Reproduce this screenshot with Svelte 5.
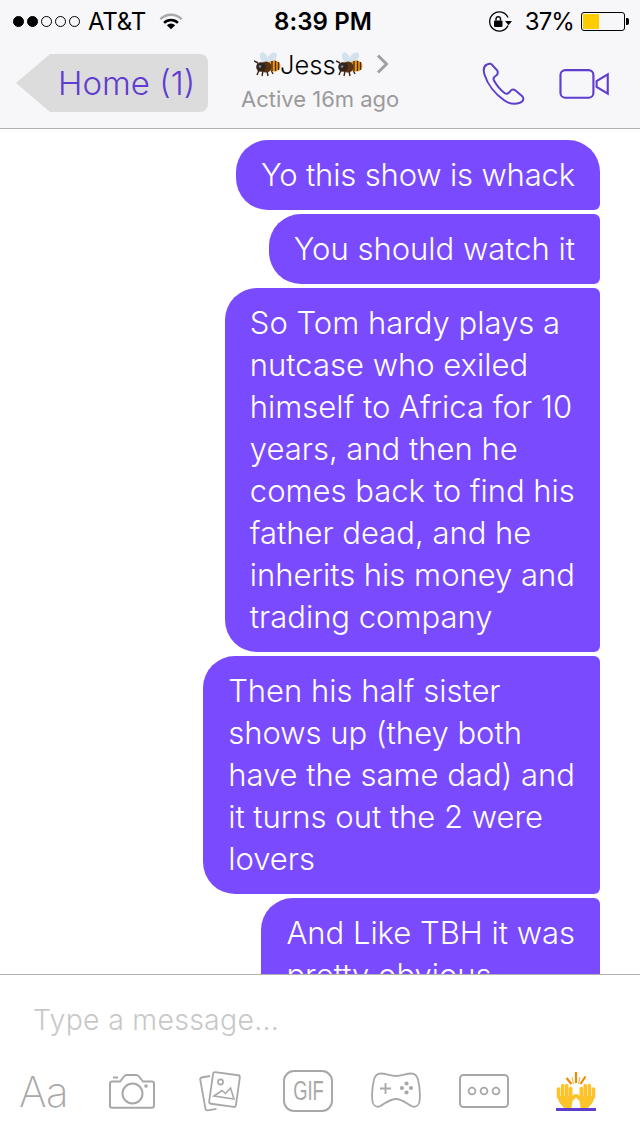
<script>
  const messages = [
    { lines: ['Yo this show is whack'], kind: 'first' },
    { lines: ['You should watch it'], kind: 'mid' },
    { lines: ['So Tom hardy plays a', 'nutcase who exiled', 'himself to Africa for 10', 'years, and then he', 'comes back to find his', 'father dead, and he', 'inherits his money and', 'trading company'], kind: 'mid' },
    { lines: ['Then his half sister', 'shows up (they both', 'have the same dad) and', 'it turns out the 2 were', 'lovers'], kind: 'mid' },
    { lines: ['And Like TBH it was', 'pretty obvious'], kind: 'mid' }
  ];
</script>

{#snippet bee()}
  <svg class="bee" viewBox="0 0 27 25" aria-hidden="true">
    <ellipse cx="10" cy="6" rx="3.600" ry="6" transform="rotate(-25 10 6)" fill="#d3e2ec" />
    <ellipse cx="18" cy="6" rx="3.800" ry="6.500" transform="rotate(40 18 6)" fill="#d3e2ec" />
    <path d="M5 18l-2 5M9 19l-1 5M13 19l1 5M17 18l2 4M4 11L0 9" stroke="#3b2413" stroke-width="1.400" fill="none" />
    <ellipse cx="20" cy="14" rx="6.500" ry="5.500" fill="#ee9a1e" />
    <path d="M18 9v10M21.500 8.800v10.200M24.500 10v8" stroke="#4a2a10" stroke-width="1.400" />
    <ellipse cx="12" cy="15" rx="5.500" ry="5.500" fill="#5a3112" />
    <circle cx="7" cy="15" r="4.800" fill="#33241a" />
    <circle cx="6" cy="14.500" r="1.300" fill="#6f8fa8" />
  </svg>
{/snippet}

<div class="phone">
  <header class="top">
    <div class="status">
      <div class="status-left">
        <span class="dots">
          <i class="on"></i><i class="on"></i><i></i><i></i><i></i>
        </span>
        <span class="carrier">AT&amp;T</span>
        <svg class="wifi" viewBox="0 0 26 18" aria-hidden="true">
          <path d="M1.500 6.500a16 16 0 0 1 23 0" fill="none" stroke="#a9a9a9" stroke-width="2.600" />
          <path d="M5.500 10.500a10.500 10.500 0 0 1 15 0" fill="none" stroke="#000" stroke-width="2.600" />
          <path d="M13 17.500l-4.500-4.500a6.500 6.500 0 0 1 9 0z" fill="#000" />
        </svg>
      </div>
      <div class="clock">8:39 PM</div>
      <div class="status-right">
        <svg class="lock" viewBox="0 0 24 21" aria-hidden="true">
          <path d="M20 6.500A9.600 9.600 0 1 0 20 14.500" fill="none" stroke="#000" stroke-width="1.300" />
          <path d="M17 10h7l-3.500 4.200z" fill="#000" />
          <rect x="6" y="9.500" width="8.500" height="6.500" rx="1" fill="#000" />
          <path d="M8 9.500V7.500a2.300 2.300 0 0 1 4.500 0v2" fill="none" stroke="#000" stroke-width="1.400" />
        </svg>
        <span class="pct">37%</span>
        <span class="battery"><span class="level"></span></span>
        <span class="nub"></span>
      </div>
    </div>
    <nav class="nav">
      <div class="back"><span class="back-label">Home (1)</span></div>
      <div class="who">
        <div class="name">{@render bee()}<span class="jess">Jess</span>{@render bee()}
          <svg class="chev" viewBox="0 0 13 20" aria-hidden="true"><path d="M2 1.500l8.500 8.500-8.500 8.500" fill="none" stroke="#a0a0a0" stroke-width="3" /></svg>
        </div>
        <div class="active">Active 16m ago</div>
      </div>
      <div class="actions">
        <svg class="phone-ic" viewBox="0 0 44 44" aria-hidden="true">
          <path d="M5 2.500c-3 1.500-4 5-2.500 10 3 10 11 20 20 26 5 3.500 11 4 16 2 3-1.500 3.500-4 2-6l-7-6c-2-1.500-4-1-5.500 1l-1.500 1.500c-1 1-2.500 1-4 0-4-3-8-8-10.500-12.500-.8-1.500-.5-3 .8-4l1.500-1c1.500-1.200 1.800-3 1-5L11 4c-1.300-2.500-3.500-3-6-1.500z" fill="none" stroke="#5f3dcf" stroke-width="2" />
        </svg>
        <svg class="video-ic" viewBox="0 0 52 32" aria-hidden="true">
          <rect x="1.200" y="1.200" width="34" height="28.500" rx="5" fill="none" stroke="#5f3dcf" stroke-width="2.200" />
          <path d="M50 5.500v20l-11.500-7v-6z" fill="none" stroke="#5f3dcf" stroke-width="2.200" />
        </svg>
      </div>
    </nav>
  </header>

  <main class="thread">
    {#each messages as msg}
      <div class="bubble {msg.kind}">
        {#each msg.lines as line}<div>{line}</div>{/each}
      </div>
    {/each}
  </main>

  <footer class="composer">
    <div class="placeholder">Type a message...</div>
    <div class="tools">
      <span class="aa">Aa</span>
      <svg class="t-cam" viewBox="0 0 46 36" aria-hidden="true">
        <path d="M4 4.500h5M3 8.500h8l4-5c.8-1 1.800-1.500 3-1.500h9c1.200 0 2.200.5 3 1.500l4 5h9c1 0 2 1 2 2v22c0 1.200-1 2.300-2.300 2.300H3c-1.200 0-2-1-2-2.300v-22c0-1 1-2 2-2z" fill="none" stroke="#a8a8a8" stroke-width="2" />
        <circle cx="23.500" cy="20.500" r="10" fill="none" stroke="#a8a8a8" stroke-width="2" />
        <circle cx="37" cy="13" r="1.800" fill="#a8a8a8" />
      </svg>
      <svg class="t-photo" viewBox="0 0 43 42" aria-hidden="true">
        <path d="M11 6L2.500 7.500c-1 .2-1.500 1-1.300 2L6.500 39c.2 1 1 1.500 2 1.300l9-1.500" fill="none" stroke="#a8a8a8" stroke-width="1.800" />
        <rect x="12" y="3.500" width="27" height="32" rx="2" transform="rotate(8 25.500 19.500)" fill="none" stroke="#a8a8a8" stroke-width="1.800" />
        <circle cx="21.500" cy="12" r="2.600" fill="none" stroke="#a8a8a8" stroke-width="1.600" />
        <path d="M15 26l8-5.500 3.500 3 5-5.500 3.500 11z" fill="none" stroke="#a8a8a8" stroke-width="1.600" />
      </svg>
      <span class="gif"><span class="gif-text">GIF</span></span>
      <svg class="t-game" viewBox="0 0 50 38" aria-hidden="true">
        <path d="M10 1.500c5 0 9 2.500 15 2.500s10-2.500 15-2.500c4 0 6 2 7 6 1.500 6 2.500 14 1.500 22-.5 4-4 6-7 5-5-2-10-7.500-16.500-7.500S13.500 32 8.500 34.500c-3 1-6.500-1-7-5-1-8 0-16 1.500-22 1-4 3-6 7-6z" fill="none" stroke="#a8a8a8" stroke-width="1.800" />
        <path d="M9 16.500h11M14.500 11v11" stroke="#a8a8a8" stroke-width="1.800" />
        <circle cx="35.500" cy="11.500" r="2.100" fill="#a8a8a8" /><circle cx="35.500" cy="20.500" r="2.100" fill="#a8a8a8" /><circle cx="31" cy="16" r="2.100" fill="#a8a8a8" /><circle cx="40" cy="16" r="2.100" fill="#a8a8a8" />
      </svg>
      <svg class="t-more" viewBox="0 0 50 34" aria-hidden="true">
        <rect x="1" y="1" width="48" height="32" rx="3.500" fill="none" stroke="#a8a8a8" stroke-width="2" />
        <circle cx="13" cy="17" r="3.400" fill="none" stroke="#a8a8a8" stroke-width="1.800" />
        <circle cx="25" cy="17" r="3.400" fill="none" stroke="#a8a8a8" stroke-width="1.800" />
        <circle cx="37" cy="17" r="3.400" fill="none" stroke="#a8a8a8" stroke-width="1.800" />
      </svg>
      <div class="hands">
        <svg class="t-hands" viewBox="0 0 40 36" aria-hidden="true">
          <path d="M20 0v11M10.500 6l5 6M29.500 4.500l-5 7.500" stroke="#f08a00" stroke-width="2.200" fill="none" />
          <path d="M16 5l1.500 7M24 5l-1.500 7" stroke="#f7b04a" stroke-width="1" fill="none" />
          <g fill="none" stroke="#fdc32a" stroke-linecap="round" stroke-width="3.600">
            <path d="M2.500 25V17M6.700 24V13.500M10.800 24V13.500M14.700 25V16.500M14 29l5-5" />
            <path d="M37.500 25V17M33.300 24V13.500M29.200 24V13.500M25.300 25V16.500M26 29l-5-5" />
          </g>
          <path d="M1 24h15.500v4l-1 8H8l-5-6zM39 24H23.500v4l1 8H32l5-6z" fill="#fdc32a" />
        </svg>
        <span class="underline"></span>
      </div>
    </div>
  </footer>
</div>

<style>
  :global(body) {
    margin: 0;
    background: #fff;
  }

  .phone {
    width: 640px;
    height: 1136px;
    display: flex;
    flex-direction: column;
    overflow: hidden;
    font-family: Inter, "Liberation Sans", sans-serif;
    color: #000;
  }

  .top {
    height: 129px;
    box-sizing: border-box;
    flex: none;
    background: #f7f6f9;
    border-bottom: 1px solid #b2b2b2;
    display: flex;
    flex-direction: column;
  }

  .status {
    height: 42px;
    padding: 0 11px 0 13px;
    display: flex;
    align-items: center;
    justify-content: space-between;
    position: relative;
    font-size: 24px;
  }

  .status-left,
  .status-right {
    display: flex;
    align-items: center;
  }

  .dots {
    display: flex;
    gap: 3px;
    margin-right: 9px;
  }

  .dots i {
    width: 9px;
    height: 9px;
    border: 1px solid #000;
    border-radius: 50%;
  }

  .dots i.on {
    background: #000;
  }

  .carrier {
    letter-spacing: -0.2px;
    margin-left: -1px;
  }

  .wifi {
    width: 24px;
    height: 17px;
    margin-left: 13px;
  }

  .clock {
    position: absolute;
    left: 274px;
    font-weight: 600;
    letter-spacing: 0.1px;
  }

  .lock {
    width: 24px;
    height: 21px;
    margin-right: 13px;
  }

  .pct {
    letter-spacing: -0.9px;
  }

  .battery {
    width: 44px;
    height: 19px;
    box-sizing: border-box;
    margin-left: 7px;
    border: 1px solid #000;
    border-radius: 3px;
    padding: 1px;
    display: flex;
  }

  .level {
    width: 16px;
    background: #ffcc00;
  }

  .nub {
    width: 3px;
    height: 7px;
    background: #000;
    border-radius: 0 2px 2px 0;
    margin-left: 1px;
  }

  .nav {
    flex: 1;
    position: relative;
    display: flex;
    align-items: flex-start;
  }

  .back {
    margin: 12px 0 0 16px;
    width: 192px;
    height: 58px;
    box-sizing: border-box;
    background: #dcdcdc;
    clip-path: polygon(0 50%, 34px 0, 100% 0, 100% 100%, 34px 100%);
    border-radius: 0 8px 8px 0;
    display: flex;
    align-items: center;
    padding-left: 42px;
  }

  .back-label {
    color: #5f3dcf;
    font-size: 33px;
    font-weight: 350;
    white-space: nowrap;
  }

  .who {
    margin: 7px 0 0 33px;
    width: 170px;
  }

  .name {
    display: flex;
    align-items: center;
    height: 30px;
    padding-left: 13px;
    font-size: 25.500px;
    font-weight: 350;
  }

  .jess {
    margin-left: -1px;
  }

  .bee {
    width: 27px;
    height: 25px;
    flex: none;
  }

  .chev {
    width: 13px;
    height: 20px;
    flex: none;
    margin-left: 13px;
  }

  .active {
    color: #9a9a9a;
    font-size: 22px;
    margin-top: 7px;
    white-space: nowrap;
  }

  .actions {
    display: flex;
    align-items: center;
    margin-left: 71px;
    margin-top: 20px;
    gap: 33px;
  }

  .phone-ic {
    width: 44px;
    height: 44px;
  }

  .video-ic {
    width: 51px;
    height: 31px;
  }

  .thread {
    flex: 1;
    min-height: 0;
    overflow: hidden;
    padding: 11px 40px 0 0;
    display: flex;
    flex-direction: column;
    align-items: flex-end;
    gap: 4px;
  }

  .bubble {
    flex: none;
    background: #7a4aff;
    color: #fff;
    font-size: 31px;
    font-weight: 350;
    line-height: 42px;
    padding: 14px 25px;
    border-radius: 32px 6px 6px 32px;
    white-space: nowrap;
  }

  .bubble.first {
    border-top-right-radius: 32px;
    letter-spacing: -0.15px;
  }

  .composer {
    flex: none;
    background: #fff;
    border-top: 1px solid #b2b2b2;
    box-sizing: border-box;
    height: 162px;
  }

  .placeholder {
    color: #c8c8c8;
    font-size: 28.500px;
    font-weight: 350;
    letter-spacing: 0.25px;
    line-height: 36px;
    padding: 27px 0 0 33px;
  }

  .tools {
    display: flex;
    align-items: center;
    margin-top: 31px;
    padding-left: 19px;
    height: 44px;
  }

  .aa {
    width: 90px;
    color: #a8a8a8;
    font-size: 42px;
    font-weight: 250;
    letter-spacing: -0.5px;
  }

  .t-cam {
    width: 46px;
    height: 36px;
  }

  .t-photo {
    width: 43px;
    height: 42px;
    margin-left: 44px;
  }

  .gif {
    width: 50px;
    height: 42px;
    box-sizing: border-box;
    margin-left: 41px;
    border: 2px solid #a8a8a8;
    border-radius: 11px;
    color: #a8a8a8;
    display: flex;
    align-items: center;
    justify-content: center;
    font-size: 27px;
    font-family: "Liberation Sans", sans-serif;
  }

  .gif-text {
    display: inline-block;
    transform: scaleX(0.68);
  }

  .t-game {
    width: 50px;
    height: 38px;
    margin-left: 38px;
  }

  .t-more {
    width: 50px;
    height: 34px;
    margin-left: 38px;
  }

  .hands {
    margin-left: 47px;
    width: 40px;
    display: flex;
    flex-direction: column;
  }

  .t-hands {
    width: 40px;
    height: 36px;
  }

  .underline {
    height: 3px;
    background: #5f3dcf;
  }
</style>
